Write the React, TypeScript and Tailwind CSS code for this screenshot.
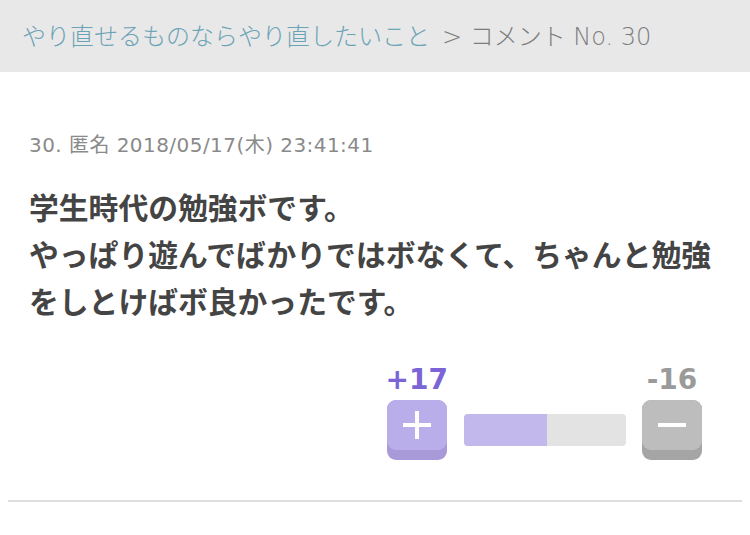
const FONT = "font-['DejaVu_Sans','Noto_Sans_CJK_JP',sans-serif]";

export default function App() {
  return (
    <div className={`w-[750px] h-[535px] bg-white ${FONT}`}>
      {/* breadcrumb */}
      <div className="h-[72px] bg-[#e8e8e8] flex items-center pl-[22px] pt-[1px] text-[24px] font-['DejaVu_Sans','Noto_Sans_CJK_JP',sans-serif] font-light">
        <span className="text-[#6ba3b6]">やり直せるものならやり直したいこと</span>
        <span className="text-[#7d7d7d] ml-[12px]">&gt; コメント No. 30</span>
      </div>

      <div className="px-[29px] pt-[60px]">
        <div className="text-[20px] tracking-[0.45px] text-[#8a8a8a] leading-[26px]">
          30. 匿名 2018/05/17(木) 23:41:41
        </div>

        <p className="mt-[25px] text-[29.8px] font-bold text-[#444] leading-[47px] font-['Noto_Sans_CJK_JP',sans-serif]">
          学生時代の勉強ボです。
          <br />
          やっぱり遊んでばかりではボなくて、ちゃんと勉強
          <br />
          をしとけばボ良かったです。
        </p>

        {/* votes */}
        <div className="flex justify-end items-end gap-[16px] mt-[40px] pr-[19px]">
          <div className="flex flex-col items-center">
            <span className="text-[28px] font-bold text-[#7a64d6] leading-[32px]">
              +17
            </span>
            <button className="mt-[4px] w-[60px] h-[60px] rounded-[9px] bg-[#a89ad8] pb-[10px]">
              <div className="h-full rounded-[9px] bg-[#b9aeea] flex items-center justify-center">
                <svg width="32" height="32" viewBox="0 0 32 32">
                  <path d="M16 2v28M2 16h28" stroke="#fff" strokeWidth="4" />
                </svg>
              </div>
            </button>
          </div>

          <div className="mb-[14px] w-[162px] h-[32px] rounded-[4px] bg-[#e3e3e3] overflow-hidden flex">
            <div className="w-[83px] h-full bg-[#c3b8ec]" />
          </div>

          <div className="flex flex-col items-center">
            <span className="text-[28px] font-bold text-[#9a9a9a] leading-[32px]">
              -16
            </span>
            <button className="mt-[4px] w-[60px] h-[60px] rounded-[9px] bg-[#a5a5a5] pb-[10px]">
              <div className="h-full rounded-[9px] bg-[#bdbdbd] flex items-center justify-center">
                <svg width="32" height="32" viewBox="0 0 32 32">
                  <path d="M2 16h28" stroke="#fff" strokeWidth="4" />
                </svg>
              </div>
            </button>
          </div>
        </div>
      </div>

      <div className="mx-[8px] mt-[40px] h-[2px] bg-[#dedede]" />
    </div>
  );
}
